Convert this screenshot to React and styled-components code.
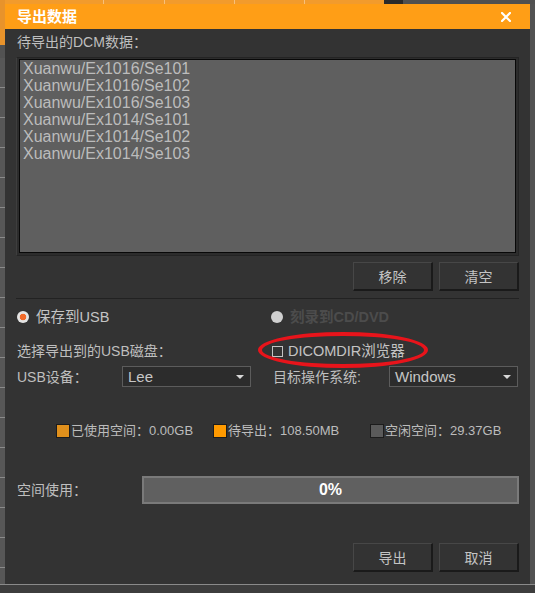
import React from "react";
import styled, { createGlobalStyle } from "styled-components";

const GlobalStyle = createGlobalStyle`
  html, body {
    margin: 0;
    padding: 0;
    background: #4b4b4b;
  }
  body {
    font-family: "Liberation Sans", Arial, "Noto Sans CJK SC", sans-serif;
  }
  * {
    box-sizing: border-box;
  }
`;

const Page = styled.div`
  width: 535px;
  height: 593px;
  padding: 4px 0 0 5px;
  overflow: hidden;
  background:
    linear-gradient(to right, #e8932b 0 5px, transparent 5px) 0 0 / 100% 45px no-repeat,
    linear-gradient(to right, #f29b2c 0 103px, #f7c07a 103px 104px, #f29b2c 104px 164px,
      #f7c07a 164px 165px, #f29b2c 165px 234px, #f7c07a 234px 235px, #f29b2c 235px 304px,
      #f7c07a 304px 305px, #f29b2c 305px 384px, #2a2a2a 384px 403px, #505050 403px) 0 0 / 100% 4px no-repeat,
    linear-gradient(to bottom, transparent 584px, #8a8a8a 584px 585px, #3d3d3d 585px),
    repeating-linear-gradient(to bottom, #575757 0 29px, #8a8a8a 29px 30px) 0 58px / 5px 100% no-repeat,
    #525252;
`;

const Dialog = styled.div`
  width: 525px;
  height: 580px;
  background: #333333;
  display: flex;
  flex-direction: column;
`;

const TitleBar = styled.div`
  height: 25px;
  flex: none;
  background: #ff9e16;
  display: flex;
  align-items: center;
  justify-content: space-between;
  padding: 0 19px 0 12px;
`;

const Title = styled.div`
  color: #ffffff;
  font-size: 15px;
  font-weight: bold;
  line-height: 20px;
`;

const Close = styled.button`
  border: none;
  background: none;
  padding: 0;
  width: 10px;
  height: 10px;
  display: flex;
  cursor: pointer;
`;

const Body = styled.div`
  flex: 1;
  padding: 3px 11px 12px 11px;
  display: flex;
  flex-direction: column;
`;

const Label = styled.div`
  color: #bfbfbf;
  font-size: 14px;
  line-height: 20px;
  height: 20px;
  white-space: nowrap;
  padding-left: ${(p) => p.$indent || 0}px;
`;

const ListFrame = styled.div`
  margin-top: 5px;
  height: 199px;
  border: 1px solid #242424;
  border-left-color: #3e3e3e;
  padding: 1px 2px 2px 2px;
  background: #2c2c2c;
`;

const ListBox = styled.div`
  height: 100%;
  background: #5f5f5f;
  border: 1px solid #080808;
  padding: 0 3px;
`;

const ListItem = styled.div`
  color: #bcbcbc;
  font-size: 16px;
  line-height: 17px;
  white-space: nowrap;
`;

const ButtonRow = styled.div`
  display: flex;
  justify-content: flex-end;
  gap: 6px;
  margin-top: ${(p) => p.$top}px;
`;

const Button = styled.button`
  width: 80px;
  height: 29px;
  background: #333333;
  border-style: solid;
  border-width: 1px 2px 2px 1px;
  border-color: #474747 #1a1a1a #1a1a1a #474747;
  color: #c4c4c4;
  font-family: inherit;
  font-size: 14px;
  padding: 0;
  cursor: pointer;
`;

const Separator = styled.div`
  margin-top: 7px;
  height: 1px;
  background: #222222;
`;

const Options = styled.div`
  margin-top: 8px;
  display: grid;
  grid-template-columns: 255px 1fr;
  grid-template-rows: 20px 34px 26px;
  align-items: end;
`;

const Radio = styled.label`
  display: flex;
  align-items: center;
  gap: 6px;
  height: 20px;
  font-size: 14.5px;
  line-height: 20px;
  color: ${(p) => (p.$disabled ? "#4c4c4c" : "#c4c4c4")};
  font-weight: ${(p) => (p.$disabled ? "bold" : "normal")};
  padding-left: ${(p) => (p.$disabled ? 0 : 1)}px;
  white-space: nowrap;
`;

const RadioDot = styled.span`
  width: 12px;
  height: 12px;
  border-radius: 50%;
  flex: none;
  background: ${(p) =>
    p.$checked
      ? "radial-gradient(circle, #f26a2a 0 3px, #e4e4e4 3.6px)"
      : "#d0d0d0"};
  margin-right: 1px;
`;

const CheckWrap = styled.div`
  position: relative;
  display: flex;
  align-items: center;
  gap: 5px;
  height: 20px;
  padding-left: 1px;
  font-size: 14.5px;
  line-height: 20px;
  color: #c4c4c4;
  white-space: nowrap;
`;

const CheckBox = styled.span`
  width: 11px;
  height: 11px;
  flex: none;
  border: 1px solid #c4c4c4;
`;

const RedMark = styled.span`
  position: absolute;
  left: -13px;
  top: -9px;
  width: 170px;
  height: 36px;
  border: 4px solid #e8141b;
  border-radius: 50%;
  pointer-events: none;
`;

const Field = styled.div`
  display: flex;
  align-items: center;
  height: 21px;
`;

const FieldLabel = styled.div`
  width: ${(p) => p.$width}px;
  flex: none;
  padding-left: ${(p) => p.$indent || 0}px;
  color: #bfbfbf;
  font-size: 14px;
  line-height: 20px;
  white-space: nowrap;
`;

const Select = styled.div`
  width: 129px;
  height: 21px;
  background: #2c2c2c;
  border: 1px solid #5c5c5c;
  display: flex;
  align-items: center;
  justify-content: space-between;
  padding: 0 6px 0 5px;
  color: #c6c6c6;
  font-size: 15px;
  line-height: 19px;
`;

const Arrow = styled.span`
  width: 0;
  height: 0;
  border-left: 4px solid transparent;
  border-right: 4px solid transparent;
  border-top: 4px solid #d8d8d8;
`;

const Legend = styled.div`
  margin-top: 37px;
  margin-left: 40px;
  display: grid;
  grid-template-columns: repeat(3, 157px);
  height: 14px;
`;

const LegendItem = styled.div`
  display: flex;
  align-items: center;
  gap: 1px;
  color: #bcbcbc;
  font-size: 13px;
  line-height: 14px;
  white-space: nowrap;
`;

const Swatch = styled.span`
  width: 14px;
  height: 14px;
  flex: none;
  border: 1px solid #1c1c1c;
  background: ${(p) => p.$color};
`;

const UsageRow = styled.div`
  margin-top: 38px;
  display: flex;
  align-items: center;
  height: 28px;
`;

const Progress = styled.div`
  flex: 1;
  height: 28px;
  background: #606060;
  border: 2px solid #7a7a7a;
  display: flex;
  align-items: center;
  justify-content: center;
  color: #ffffff;
  font-size: 16px;
  font-weight: bold;
`;

const paths = [
  "Xuanwu/Ex1016/Se101",
  "Xuanwu/Ex1016/Se102",
  "Xuanwu/Ex1016/Se103",
  "Xuanwu/Ex1014/Se101",
  "Xuanwu/Ex1014/Se102",
  "Xuanwu/Ex1014/Se103",
];

const legend = [
  { color: "#e0901c", text: "已使用空间：0.00GB" },
  { color: "#ff9a00", text: "待导出：108.50MB" },
  { color: "#5a5a5a", text: "空闲空间：29.37GB" },
];

export default function App() {
  return (
    <Page>
      <GlobalStyle />
      <Dialog>
        <TitleBar>
          <Title>导出数据</Title>
          <Close aria-label="关闭">
            <svg width="10" height="10" viewBox="0 0 10 10">
              <path d="M1 1 L9 9 M9 1 L1 9" stroke="#fff" strokeWidth="2.2" strokeLinecap="square" />
            </svg>
          </Close>
        </TitleBar>
        <Body>
          <Label $indent={1}>待导出的DCM数据：</Label>
          <ListFrame>
            <ListBox>
              {paths.map((p) => (
                <ListItem key={p}>{p}</ListItem>
              ))}
            </ListBox>
          </ListFrame>
          <ButtonRow $top={6}>
            <Button>移除</Button>
            <Button>清空</Button>
          </ButtonRow>
          <Separator />
          <Options>
            <Radio>
              <RadioDot $checked />
              保存到USB
            </Radio>
            <Radio $disabled>
              <RadioDot />
              刻录到CD/DVD
            </Radio>
            <Label $indent={1}>选择导出到的USB磁盘：</Label>
            <CheckWrap>
              <CheckBox />
              DICOMDIR浏览器
              <RedMark />
            </CheckWrap>
            <Field>
              <FieldLabel $width={106} $indent={1}>USB设备：</FieldLabel>
              <Select>
                Lee
                <Arrow />
              </Select>
            </Field>
            <Field>
              <FieldLabel $width={118} $indent={2}>目标操作系统:</FieldLabel>
              <Select>
                Windows
                <Arrow />
              </Select>
            </Field>
          </Options>
          <Legend>
            {legend.map((l) => (
              <LegendItem key={l.text}>
                <Swatch $color={l.color} />
                {l.text}
              </LegendItem>
            ))}
          </Legend>
          <UsageRow>
            <FieldLabel $width={126} $indent={1}>空间使用：</FieldLabel>
            <Progress>0%</Progress>
          </UsageRow>
          <ButtonRow $top={39}>
            <Button>导出</Button>
            <Button>取消</Button>
          </ButtonRow>
        </Body>
      </Dialog>
    </Page>
  );
}
